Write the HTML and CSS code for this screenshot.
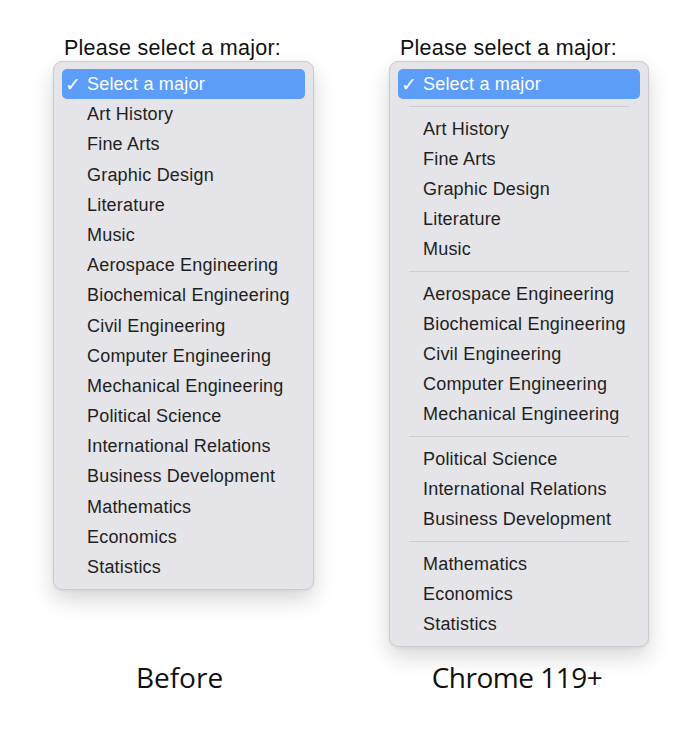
FILE: index.html
```html
<!DOCTYPE html>
<html lang="en">
<head>
  <meta charset="UTF-8">
  <title>Select separators</title>
  <link rel="stylesheet" href="styles.css">
</head>
<body>
  <div class="compare">
    <div class="prompt">Please select a major:</div>
    <div class="prompt">Please select a major:</div>

    <ul class="menu">
      <li class="item selected"><span class="check">✓</span>Select a major</li>
      <li class="item">Art History</li>
      <li class="item">Fine Arts</li>
      <li class="item">Graphic Design</li>
      <li class="item">Literature</li>
      <li class="item">Music</li>
      <li class="item">Aerospace Engineering</li>
      <li class="item">Biochemical Engineering</li>
      <li class="item">Civil Engineering</li>
      <li class="item">Computer Engineering</li>
      <li class="item">Mechanical Engineering</li>
      <li class="item">Political Science</li>
      <li class="item">International Relations</li>
      <li class="item">Business Development</li>
      <li class="item">Mathematics</li>
      <li class="item">Economics</li>
      <li class="item">Statistics</li>
    </ul>

    <ul class="menu grouped">
      <li class="item selected"><span class="check">✓</span>Select a major</li>
      <li class="sep"></li>
      <li class="item">Art History</li>
      <li class="item">Fine Arts</li>
      <li class="item">Graphic Design</li>
      <li class="item">Literature</li>
      <li class="item">Music</li>
      <li class="sep"></li>
      <li class="item">Aerospace Engineering</li>
      <li class="item">Biochemical Engineering</li>
      <li class="item">Civil Engineering</li>
      <li class="item">Computer Engineering</li>
      <li class="item">Mechanical Engineering</li>
      <li class="sep"></li>
      <li class="item">Political Science</li>
      <li class="item">International Relations</li>
      <li class="item">Business Development</li>
      <li class="sep"></li>
      <li class="item">Mathematics</li>
      <li class="item">Economics</li>
      <li class="item">Statistics</li>
    </ul>

    <div class="caption">Before</div>
    <div class="caption">Chrome 119+</div>
  </div>
</body>
</html>
```

FILE: styles.css
```css
body { margin: 0; background: #ffffff; font-family: "Liberation Sans", Arial, sans-serif; color: #1d1d1f; }
.compare { display: grid; grid-template-columns: 261px 260px; column-gap: 75px; padding: 35px 0 0 53px; align-items: start; }
.prompt { font-size: 21.5px; line-height: 26px; letter-spacing: 0.25px; padding-left: 11px; color: #111; }
.menu { list-style: none; margin: 0; padding: 7px 8px; background: #e5e4e9; border: 1px solid #cbcacf; border-radius: 9px; box-shadow: 0 10px 22px rgba(0, 0, 0, 0.16), 0 1px 3px rgba(0, 0, 0, 0.06); }
.item { height: 30.2px; line-height: 30px; padding-left: 25px; font-size: 18px; letter-spacing: 0.2px; color: #1f1f22; border-radius: 5px; position: relative; white-space: nowrap; }
.grouped .item { height: 30px; }
.item.selected { background: #5b9df8; color: #ffffff; }
/* check mark sits in the left gutter */
.check { position: absolute; left: 3px; top: 0; font-family: "DejaVu Sans", sans-serif; font-size: 19px; font-weight: bold; }
.sep { height: 1px; margin: 6.5px 11px 7.5px; background: #cdccd1; }
.caption { margin-top: 11px; text-align: center; font-family: "Open Sans", sans-serif; font-size: 28px; line-height: 38px; color: #111; padding-right: 8px; }
.caption + .caption { padding-right: 4px; letter-spacing: -0.5px; }
```
